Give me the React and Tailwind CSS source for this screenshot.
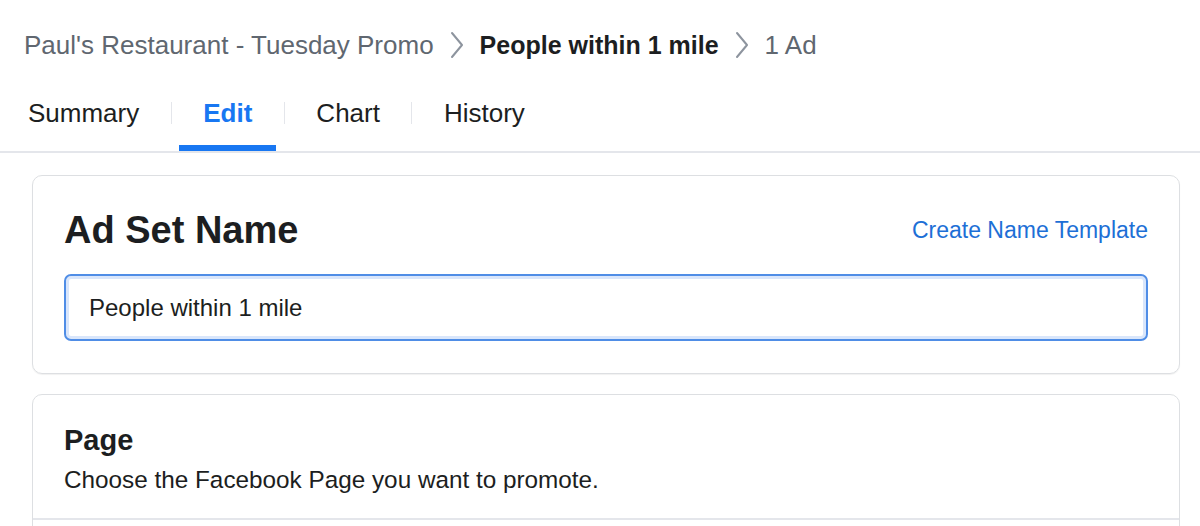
import React from "react";

const font = { fontFamily: '"Liberation Sans", Arial, sans-serif' };

const Chevron = () => (
    <svg width="16" height="28" viewBox="0 0 16 28" className="mx-[15px] shrink-0">
        <path d="M3 2 L13 14 L3 26" fill="none" stroke="#8d949e" strokeWidth="2" strokeLinecap="round" strokeLinejoin="round" />
    </svg>
);

const Sep = () => <div className="mt-[12px] h-[22px] w-px bg-[#e4e6eb] mx-[7.5px]"></div>;

const Tab = ({ label, active }) => (
    <div
        className={
            active
                ? "h-[61px] px-6 pt-[8px] border-b-[6px] border-[#1877f2] text-[#1877f2] font-bold"
                : "h-[61px] px-6 pt-[8px] border-b-[6px] border-transparent text-[#1c1e21]"
        }
    >
        <span className="block text-[26px] leading-[30px]">{label}</span>
    </div>
);

const App = () => {
    return (
        <div style={font} className="w-[1200px] h-[526px] overflow-hidden bg-white">
            <div className="h-[90px] pl-[24px] flex items-center text-[26px] leading-[30px] text-[#606770]">
                <span>Paul's Restaurant - Tuesday Promo</span>
                <Chevron />
                <span className="font-bold text-[25px] text-[#1c1e21]">People within 1 mile</span>
                <Chevron />
                <span>1 Ad</span>
            </div>

            <div className="flex items-start pl-[4px] border-b-2 border-[#e4e6eb]">
                <Tab label="Summary" />
                <Sep />
                <Tab label="Edit" active />
                <Sep />
                <Tab label="Chart" />
                <Sep />
                <Tab label="History" />
            </div>

            <main className="pl-[32px] pr-[20px] pt-[22px]">
                <section className="border border-[#dddfe2] rounded-[10px] px-[31px] pt-[32px] pb-[32px] shadow-[0_1px_1px_rgba(0,0,0,0.06)]">
                    <div className="flex items-center justify-between h-[44px]">
                        <h1 className="text-[38px] leading-[44px] font-bold text-[#1c1e21]">Ad Set Name</h1>
                        <a className="text-[23px] leading-[28px] text-[#1d6fd6]">Create Name Template</a>
                    </div>
                    <div className="mt-[22px] h-[67px] rounded-[7px] border-2 border-[#4f8de6] shadow-[inset_0_0_0_3px_#d9e6fb] flex items-center px-[23px]">
                        <span className="text-[24px] leading-[30px] text-[#1c1e21]">People within 1 mile</span>
                    </div>
                </section>

                <section className="mt-[20px] border border-[#dddfe2] rounded-[10px]">
                    <div className="px-[31px] pt-[28px] pb-[22px]">
                        <h2 className="text-[29px] leading-[34px] font-bold text-[#1c1e21]">Page</h2>
                        <p className="mt-[7px] text-[24.3px] leading-[32px] text-[#1c1e21]">Choose the Facebook Page you want to promote.</p>
                    </div>
                    <div className="border-t-2 border-[#e4e6eb] h-[60px]"></div>
                </section>
            </main>
        </div>
    );
};

export default App;
